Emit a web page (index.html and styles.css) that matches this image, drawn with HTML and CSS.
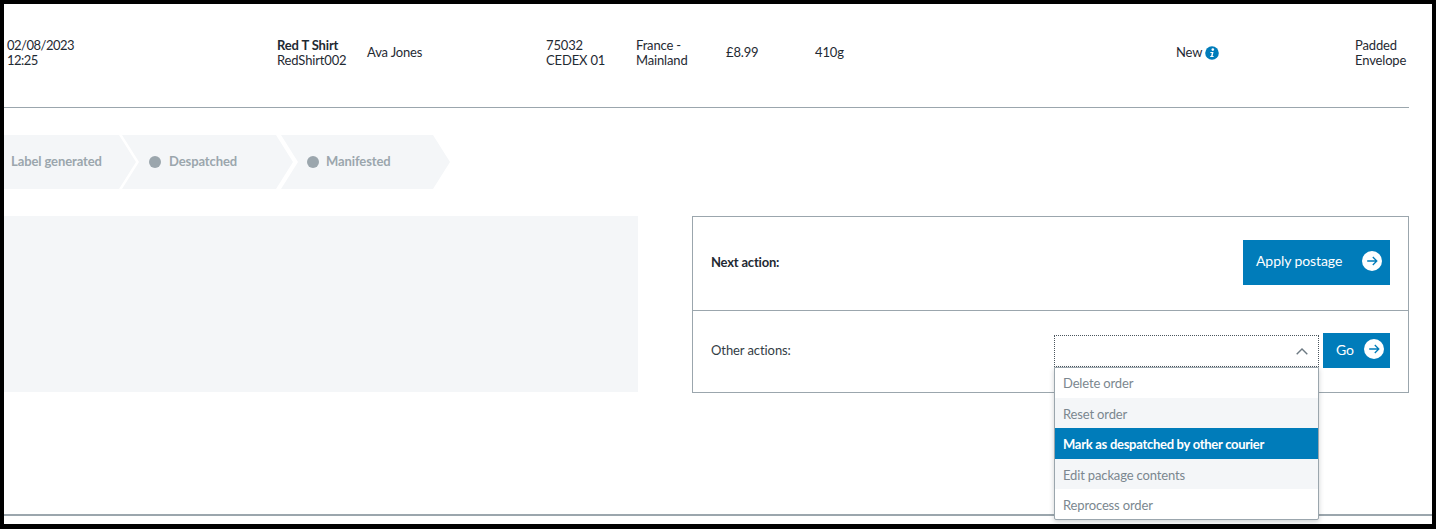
FILE: index.html
```html
<!DOCTYPE html>
<html lang="en">
<head>
<meta charset="utf-8">
<title>Order</title>
<link rel="stylesheet" href="styles.css">
</head>
<body>
<div class="frame">
  <div class="order-row">
    <div class="cell cell-date">02/08/2023<br>12:25</div>
    <div class="cell"><strong>Red T Shirt</strong><br>RedShirt002</div>
    <div class="cell">Ava Jones</div>
    <div class="cell">75032<br>CEDEX 01</div>
    <div class="cell">France -<br>Mainland</div>
    <div class="cell">£8.99</div>
    <div class="cell">410g</div>
    <div class="cell status">New
      <svg class="info" viewBox="0 0 14 14" width="14" height="14" aria-hidden="true"><circle cx="7" cy="7" r="6.8" fill="#007cba"/><circle cx="7.8" cy="3.600" r="1.300" fill="#fff"/><path d="M5.400 5.900h3.100l-.9 4.200h1v1H5.200l.1-1h.8l.7-3.200H5.300z" fill="#fff"/></svg>
    </div>
    <div class="cell">Padded<br>Envelope</div>
  </div>

  <div class="steps">
    <div class="step step-first">Label generated</div>
    <div class="step"><span class="dot"></span>Despatched</div>
    <div class="step step-last"><span class="dot"></span>Manifested</div>
  </div>

  <div class="panels">
    <div class="blank-panel"></div>
    <div class="actions">
      <div class="action-row action-next">
        <span class="action-label label-strong">Next action:</span>
        <button class="btn btn-apply" type="button">Apply postage
          <svg class="arrow" viewBox="0 0 20 20" width="20" height="20" aria-hidden="true"><circle cx="10" cy="10" r="10" fill="#fff"/><path d="M5.200 10h9M10.800 6l4 4-4 4" fill="none" stroke="#007cba" stroke-width="1.300"/></svg>
        </button>
      </div>
      <div class="action-row action-other">
        <span class="action-label">Other actions:</span>
        <div class="controls">
          <div class="select">
            <svg class="chev" viewBox="0 0 12 7" width="12" height="7" aria-hidden="true"><path d="M.7 6.300 6 1l5.300 5.300" fill="none" stroke="#6d7a83" stroke-width="1.400"/></svg>
            <ul class="menu">
              <li>Delete order</li>
              <li class="alt">Reset order</li>
              <li class="active">Mark as despatched by other courier</li>
              <li class="alt">Edit package contents</li>
              <li>Reprocess order</li>
            </ul>
          </div>
          <button class="btn btn-go" type="button">Go
            <svg class="arrow" viewBox="0 0 20 20" width="20" height="20" aria-hidden="true"><circle cx="10" cy="10" r="10" fill="#fff"/><path d="M5.200 10h9M10.800 6l4 4-4 4" fill="none" stroke="#007cba" stroke-width="1.300"/></svg>
          </button>
        </div>
      </div>
    </div>
  </div>

  <div class="bottom-rule"></div>
</div>
</body>
</html>
```
FILE: styles.css
```css
* { box-sizing: border-box; }
html, body { margin: 0; padding: 0; background: #000; }
body {
  width: 1436px;
  height: 529px;
  padding: 4px 4px 5px 4px;
  overflow: hidden;
  font-family: Lato, "Liberation Sans", sans-serif;
  font-size: 13px;
  line-height: 15px;
  letter-spacing: -0.15px;
  color: #1f2a33;
}
.frame {
  position: relative;
  height: 520px;
  background: #fff;
}
.order-row {
  display: grid;
  grid-template-columns: 270px 90px 179px 90px 90px 89px 361px 179px 54px;
  width: 1405px;
  height: 104px;
  padding: 0 0 6px 3px;
  align-items: center;
  border-bottom: 1px solid #9ba6ad;
}
.cell-date { letter-spacing: -0.5px; }
.status { display: flex; align-items: center; gap: 3px; }
.info { display: block; }
.steps {
  display: flex;
  margin-top: 27px;
  height: 54px;
  color: #9ba6ad;
  font-weight: 700;
  letter-spacing: -0.1px;
}
.step {
  display: flex;
  align-items: center;
  gap: 8px;
  width: 171px;
  height: 54px;
  margin-left: -14px;
  padding: 0 0 1px 27px;
  background: #f4f6f8;
  clip-path: polygon(0 0, 154px 0, 100% 50%, 154px 100%, 0 100%, 17px 50%);
}
.step-last {
  width: 169px;
  margin-left: -12px;
  padding-left: 26px;
  gap: 7px;
  clip-path: polygon(0 0, 152px 0, 100% 50%, 152px 100%, 0 100%, 17px 50%);
}
.step-first {
  width: 132px;
  margin-left: 0;
  padding-left: 7px;
  clip-path: polygon(0 0, 115px 0, 100% 50%, 115px 100%, 0 100%);
}
.dot {
  width: 12px;
  height: 12px;
  border-radius: 50%;
  background: #9ba6ad;
}
.panels {
  display: flex;
  align-items: flex-start;
  margin-top: 27px;
  gap: 54px;
}
.blank-panel {
  width: 634px;
  height: 176px;
  background: #f4f6f8;
}
.actions {
  width: 717px;
  height: 177px;
  border: 1px solid #9ba6ad;
}
.action-row {
  display: flex;
  align-items: center;
  justify-content: space-between;
  padding: 0 18px 3px;
}
.action-next { height: 94px; border-bottom: 1px solid #9ba6ad; }
.action-other { height: 81px; }
.action-label { color: #333d45; letter-spacing: -0.08px; }
.label-strong { font-weight: 700; color: #1f2a33; letter-spacing: -0.2px; }
.controls {
  display: flex;
  align-items: center;
  gap: 4px;
  margin-top: 1px;
}
.btn {
  display: flex;
  align-items: center;
  justify-content: space-between;
  border: 0;
  background: #007cba;
  color: #fff;
  font-family: inherit;
  font-size: 14px;
  font-weight: 400;
  letter-spacing: -0.08px;
  padding: 0 8px 3px 13px;
}
.btn-apply { width: 147px; height: 45px; }
.btn-go { width: 67px; height: 35px; padding-right: 6px; }
.select {
  position: relative;
  display: flex;
  align-items: center;
  justify-content: flex-end;
  width: 265px;
  height: 32px;
  margin-top: 1px;
  padding-right: 10px;
  border: 1px dotted #4a555d;
  background: #fff;
}
.menu {
  position: absolute;
  top: 31px;
  left: -1px;
  z-index: 2;
  width: 265px;
  margin: 0;
  padding: 0;
  list-style: none;
  background: #fff;
  border: 1px solid #9ba6ad;
  box-shadow: 0 2px 5px rgba(60, 70, 80, .25);
  color: #7b878f;
  border-radius: 0 0 2px 2px;
}
.menu li {
  height: 30.2px;
  padding-left: 8px;
  line-height: 30px;
  white-space: nowrap;
}
.menu li + li { padding-top: 1px; }
.menu .alt { background: #f4f6f8; }
.menu .active { background: #007cba; color: #fff; font-weight: 700; letter-spacing: -0.28px; }
.bottom-rule {
  position: absolute;
  left: 0;
  right: 0;
  top: 510px;
  height: 2px;
  background: #9ba6ad;
}
```
